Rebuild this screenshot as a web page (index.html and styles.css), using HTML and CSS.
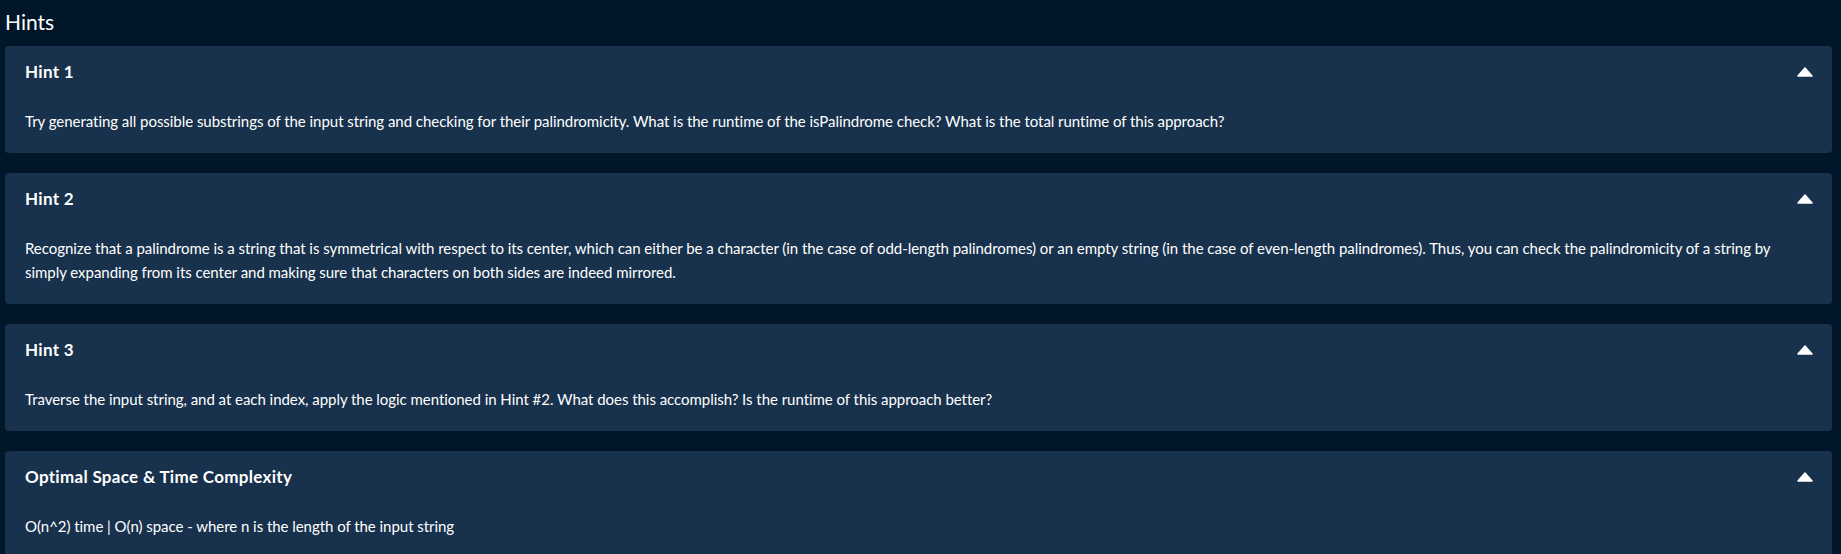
FILE: index.html
```html
<!DOCTYPE html>
<html lang="en">
<head>
<meta charset="utf-8">
<title>Hints</title>
<link rel="stylesheet" href="styles.css">
</head>
<body>
<main class="page">
  <h2 class="page-title">Hints</h2>
  <section class="hint">
    <div class="hint-head">
      <h3 class="hint-title">Hint 1</h3>
      <svg class="caret" viewBox="0 0 16 10" aria-hidden="true"><path d="M8 1 L15 9 L1 9 Z"/></svg>
    </div>
    <p class="hint-body">Try generating all possible substrings of the input string and checking for their palindromicity. What is the runtime of the isPalindrome check? What is the total runtime of this approach?</p>
  </section>
  <section class="hint">
    <div class="hint-head">
      <h3 class="hint-title">Hint 2</h3>
      <svg class="caret" viewBox="0 0 16 10" aria-hidden="true"><path d="M8 1 L15 9 L1 9 Z"/></svg>
    </div>
    <p class="hint-body">Recognize that a palindrome is a string that is symmetrical with respect to its center, which can either be a character (in the case of odd-length palindromes) or an empty string (in the case of even-length palindromes). Thus, you can check the palindromicity of a string by simply expanding from its center and making sure that characters on both sides are indeed mirrored.</p>
  </section>
  <section class="hint">
    <div class="hint-head">
      <h3 class="hint-title">Hint 3</h3>
      <svg class="caret" viewBox="0 0 16 10" aria-hidden="true"><path d="M8 1 L15 9 L1 9 Z"/></svg>
    </div>
    <p class="hint-body">Traverse the input string, and at each index, apply the logic mentioned in Hint #2. What does this accomplish? Is the runtime of this approach better?</p>
  </section>
  <section class="hint">
    <div class="hint-head">
      <h3 class="hint-title">Optimal Space &amp; Time Complexity</h3>
      <svg class="caret" viewBox="0 0 16 10" aria-hidden="true"><path d="M8 1 L15 9 L1 9 Z"/></svg>
    </div>
    <p class="hint-body">O(n^2) time | O(n) space - where n is the length of the input string</p>
  </section>
</main>
</body>
</html>
```
FILE: styles.css
```css
* { box-sizing: border-box; }
html, body {
  margin: 0;
  background: #011629;
  color: #ffffff;
  font-family: Lato, "Open Sans", "Liberation Sans", sans-serif;
}
.page {
  padding: 10px 9px 0 5px;
  display: flex;
  flex-direction: column;
  gap: 20px;
}
.page-title {
  margin: 0 0 -8px 0;
  font-size: 21px;
  line-height: 24px;
  font-weight: 400;
}
.hint {
  background: #18314c;
  border-radius: 4px;
  padding: 14px 19px 20px 20px;
}
.hint-head {
  display: flex;
  align-items: center;
  justify-content: space-between;
}
.hint-title {
  margin: 0;
  font-size: 17px;
  line-height: 24px;
  font-weight: 700;
  letter-spacing: 0.3px;
}
.caret {
  width: 16px;
  height: 10px;
  fill: #ffffff;
  stroke: #ffffff;
  stroke-width: 1.5;
  stroke-linejoin: round;
}
.hint-body {
  margin: 25px 0 0 0;
  font-size: 15px;
  line-height: 24px;
  letter-spacing: -0.04px;
}
```
